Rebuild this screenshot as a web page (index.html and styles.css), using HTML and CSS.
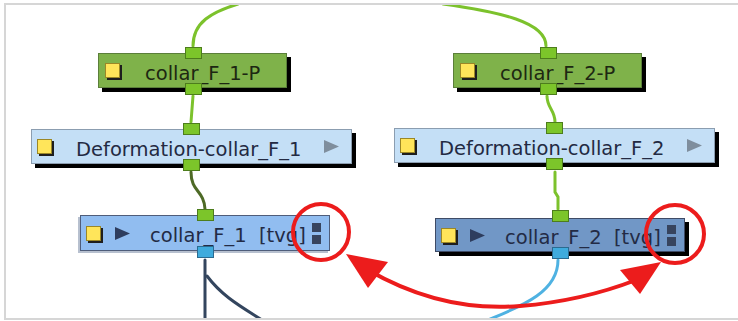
FILE: index.html
```html
<!DOCTYPE html>
<html lang="en">
<head>
  <meta charset="UTF-8">
  <title>Node view</title>
  <link rel="stylesheet" href="styles.css">
</head>
<body>
  <div class="frame">
    <!-- wires, drawn in page coordinates -->
    <svg class="layer wires" width="732" height="313" viewBox="6 5 732 313">
      <path d="M193,46 C193,22 212,12 238,4" class="w-green"/>
      <path d="M443,4 C500,12 546,22 546,46" class="w-green"/>
      <path d="M193,96 L191,122" class="w-green"/>
      <path d="M547,96 C547,108 555,110 555,122" class="w-green"/>
      <path d="M191,172 C191,192 204,190 205,209" class="w-olive"/>
      <path d="M555,172 L555,192 L558,197 L558,209" class="w-green"/>
      <path d="M205,260 L205,320" class="w-navy"/>
      <path d="M207,276 C222,296 240,306 262,320" class="w-navy"/>
      <path d="M558,260 C558,292 522,306 488,320" class="w-blue"/>
    </svg>

    <div class="node green n-a">
      <span class="port port-in"></span>
      <span class="swatch"></span>
      <span class="label">collar_F_1-P</span>
      <span class="port port-out"></span>
    </div>

    <div class="node green n-d">
      <span class="port port-in"></span>
      <span class="swatch"></span>
      <span class="label">collar_F_2-P</span>
      <span class="port port-out"></span>
    </div>

    <div class="node deform n-b">
      <span class="port port-in"></span>
      <span class="swatch"></span>
      <span class="label">Deformation-collar_F_1</span>
      <svg class="expand" width="17" height="13" viewBox="0 0 17 13"><path d="M1,0 L16,6.5 L1,13 Z"/></svg>
      <span class="port port-out"></span>
    </div>

    <div class="node deform n-e">
      <span class="port port-in"></span>
      <span class="swatch"></span>
      <span class="label">Deformation-collar_F_2</span>
      <svg class="expand" width="17" height="13" viewBox="0 0 17 13"><path d="M1,0 L16,6.5 L1,13 Z"/></svg>
      <span class="port port-out"></span>
    </div>

    <div class="node drawing n-c">
      <span class="port port-in"></span>
      <span class="swatch"></span>
      <svg class="play" width="17" height="13" viewBox="0 0 17 13"><path d="M1,0 L16,6.5 L1,13 Z"/></svg>
      <span class="label">collar_F_1&nbsp;&nbsp;[tvg]</span>
      <span class="grip"><i></i><i></i></span>
      <span class="port port-out port-blue"></span>
    </div>

    <div class="node drawing dark n-f">
      <span class="port port-in"></span>
      <span class="swatch"></span>
      <svg class="play" width="17" height="13" viewBox="0 0 17 13"><path d="M1,0 L16,6.5 L1,13 Z"/></svg>
      <span class="label">collar_F_2&nbsp;&nbsp;[tvg]</span>
      <span class="grip"><i></i><i></i></span>
      <span class="port port-out port-blue"></span>
    </div>

    <!-- red call-outs on top -->
    <svg class="layer marks" width="732" height="313" viewBox="6 5 732 313">
      <circle cx="321" cy="232" r="28"/>
      <circle cx="675" cy="234" r="29"/>
      <path d="M368,270 C420,300 470,310 520,306 C570,302 605,292 636,280" class="arc"/>
      <path d="M346,254 L388,262 L368,288 Z" class="head"/>
      <path d="M661,262 L640,294 L620,270 Z" class="head"/>
    </svg>
  </div>
</body>
</html>
```

FILE: styles.css
```css
*{
  margin: 0;
  padding: 0;
  box-sizing: border-box;
}
body{
  background-color: #fff;
  overflow: hidden;
  font-family: "DejaVu Sans", Verdana, sans-serif;
}
.frame{
  margin: 3px 0 0 4px;
  height: 317px;
  border: 2px solid #d6d6d6;
  border-right: 0;
  position: relative;
  overflow: hidden;
  background-color: #fff;
}
.layer{
  position: absolute;
  left: 0;
  top: 0;
  fill: none;
}
.wires path{
  stroke-width: 3;
  stroke-linecap: round;
}
.w-green{ stroke: #7cc22c; }
.w-olive{ stroke: #4e6a26; }
.w-navy{ stroke: #33455e; }
.w-blue{ stroke: #4fb2e2; }
.marks{
  z-index: 5;
}
.marks circle{
  stroke: #ec1c1c;
  stroke-width: 4;
}
.marks .arc{
  stroke: #ec1c1c;
  stroke-width: 4;
}
.marks .head{
  fill: #ec1c1c;
}

/* nodes */
.node{
  position: absolute;
  height: 35px;
  display: flex;
  align-items: center;
  border: 1px solid #5b7f3a;
  box-shadow: 4px 4px 0 #000;
  font-size: 19.5px;
  white-space: nowrap;
}
.label{
  margin-top: 6px;
  line-height: 20px;
}
.swatch{
  width: 15px;
  height: 15px;
  background-color: #ffe55a;
  border: 1px solid #9b8726;
  box-shadow: 2px 2px 0 #1e1e1e;
  flex: none;
}
.port{
  position: absolute;
  width: 17px;
  height: 12px;
  background-color: #7cc52a;
  border: 1px solid #4d7d1c;
}
.port-in{ top: -7px; }
.port-out{ bottom: -8px; }
.port-blue{
  background-color: #3fabdd;
  border-color: #2b6b90;
}

.green{
  width: 189px;
  background-color: #7fb24a;
  color: #1d2712;
  padding-left: 6px;
}
.green .label{ margin-left: 25px; }
.green .port{ left: 86px; }

.deform{
  width: 321px;
  background-color: #c4dff6;
  border-color: #8b9db0;
  color: #232a42;
  padding-left: 5px;
}
.deform .label{ margin-left: 24px; }
.deform .port{ left: 151px; }
.expand{
  margin-left: auto;
  margin-right: 11px;
  fill: #7f8e9d;
}

.drawing{
  width: 250px;
  background-color: #91bdf0;
  border-color: #4f5d7a;
  box-shadow: -2px 2px 0 #b7c0cf;
  color: #232b45;
  padding-left: 5px;
}
.drawing .port{ left: 116px; }
.play{
  margin-left: 13px;
  fill: #2e3d5e;
  flex: none;
}
.drawing .label{ margin-left: 19px; }
.grip{
  display: flex;
  flex-direction: column;
  gap: 3px;
  margin-left: 6px;
}
.grip i{
  width: 9px;
  height: 9px;
  background-color: #37445e;
}
.dark{
  background-color: #7197c6;
  border-color: #3e4b66;
  box-shadow: 4px 4px 0 #000;
}

.n-a{ left: 92px; top: 48px; }
.n-d{ left: 447px; top: 48px; }
.n-b{ left: 25px; top: 124px; }
.n-e{ left: 388px; top: 123px; }
.n-c{ left: 74px; top: 210px; height: 36px; }
.n-f{ left: 429px; top: 213px; height: 34px; }
.n-f .port-in{ top: -9px; }
```
